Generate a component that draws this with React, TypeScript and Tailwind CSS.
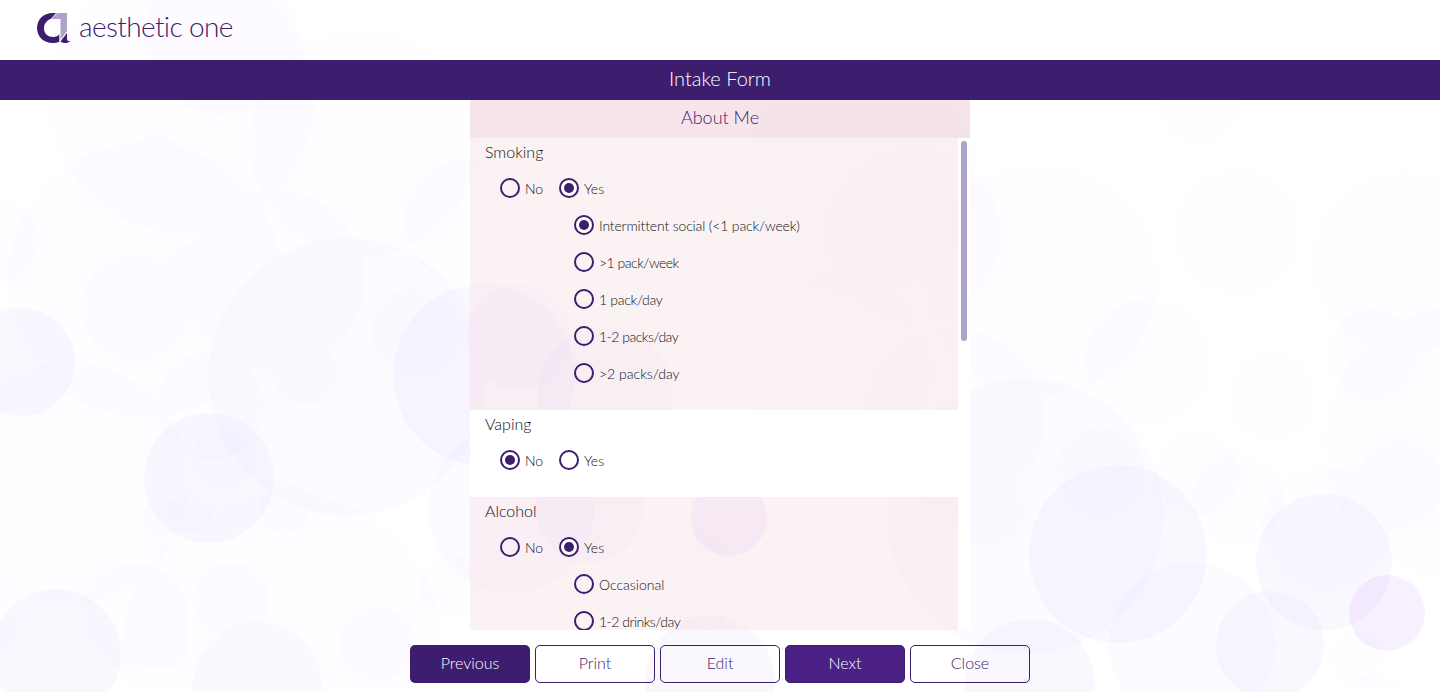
import React from "react";

type Circle = [cx: number, cy: number, r: number];

const FAINT: Circle[] = [
  [1237, 232, 63], [1404, 263, 92], [1460, 443, 137], [1272, 397, 44],
  [1148, 361, 63], [1042, 280, 116], [1199, 105, 40], [182, 100, 133], [363, 143, 114],
  [67, 483, 122], [-3, 242, 42], [283, 653, 162], [468, 222, 64], [450, 585, 31],
  [1325, 530, 64], [1238, 500, 46], [1197, 473, 43], [1355, 657, 26], [1373, 712, 38],
  [145, 280, 138], [860, 175, 118], [-20, 615, 43], [193, 512, 20], [163, 643, 26],
  [305, 373, 33], [1100, 470, 44], [990, 512, 35],
];

const SOFT: Circle[] = [
  [274, 280, 91], [135, 308, 54], [193, 283, 38], [156, 167, 32], [210, 406, 54],
  [415, 332, 44], [163, 517, 20], [284, 508, 26],
  [135, 617, 54], [231, 600, 38], [378, 644, 38], [222, 463, 32],
  [955, 419, 90], [1400, 484, 44], [1372, 355, 46],
  [221, 38, 77], [687, 583, 54], [914, 235, 87], [835, 372, 96],
];

const MEDIUM: Circle[] = [
  [347, 377, 139], [257, 687, 65], [511, 510, 83], [1025, 516, 138], [1192, 645, 83],
  [518, 337, 52],
];

const STRONG: Circle[] = [
  [21, 362, 54], [209, 478, 65], [56, 654, 65], [484, 375, 91], [605, 395, 68],
  [589, 509, 54], [710, 681, 65], [1030, 684, 65], [1118, 554, 89], [1324, 562, 68],
  [1270, 645, 54],
];

const PINK: Circle[] = [[1387, 613, 38], [729, 518, 38]];

function Layer({ items, className }: { items: Circle[]; className: string }) {
  return (
    <g className={className}>
      {items.map(([cx, cy, r], i) => (
        <circle key={i} cx={cx} cy={cy} r={r} />
      ))}
    </g>
  );
}

function Bubbles() {
  return (
    <svg className="absolute inset-0 -z-10" width="1440" height="692" viewBox="0 0 1440 692" aria-hidden="true">
      <Layer items={FAINT} className="fill-[#7a3cf0]/[0.006]" />
      <Layer items={SOFT} className="fill-[#7a3cf0]/[0.009]" />
      <Layer items={MEDIUM} className="fill-[#7a3cf0]/[0.018]" />
      <Layer items={STRONG} className="fill-[#7a3cff]/[0.035]" />
      <Layer items={PINK} className="fill-[#9a3cf0]/[0.075]" />
    </svg>
  );
}

function Logo() {
  return (
    <div className="flex items-start">
      <svg width="34" height="32" viewBox="0 0 34 32" aria-hidden="true">
        <path d="M19 1H15.500C6.500 1 0 7.500 0 16s6.500 15 15.500 15c2.500 0 5-.4 6.800-1.200V22.200C21 24 19 25 16.500 25 11 25 7 21.500 7 16.500 7 11 10.500 8 14 6.800z" fill="#3d1d6d" />
        <path d="M20 1h10v18L23.500 28V7H14.500z" fill="#aea4cb" />
        <path d="M30 21v5.500c0 2 1 2.800 3 2.500-1 1.400-3 2-4.500 2-2 0-3.500-.5-5-1.500z" fill="#3d1d6d" />
      </svg>
      <span className="mt-[-2px] ml-2 whitespace-nowrap text-[28px] leading-8 font-light tracking-[-0.62px] [font-variant-ligatures:none]">
        aesthetic one
      </span>
    </div>
  );
}

function Radio({ label, checked = false }: { label: string; checked?: boolean }) {
  const tracking = label.length > 20
    ? "tracking-[-0.15px]"
    : label.startsWith(">1") || label.startsWith("1-2")
      ? "tracking-[-0.5px]"
      : label.startsWith("1 ")
        ? "tracking-[-0.3px]"
        : "";
  return (
    <label className="flex h-[37px] items-start gap-[5px] pt-2">
      <span className={checked
        ? "flex size-5 shrink-0 items-center justify-center rounded-full border-2 border-[#3d1d6d] bg-white"
        : "flex size-5 shrink-0 rounded-full border-2 border-[#3d1d6d]"}>
        {checked && <span className="size-2.5 rounded-full bg-[#3d1d6d]" />}
      </span>
      <span className={`whitespace-nowrap text-[14px] leading-[21px] text-[#101214] ${tracking}`}>{label}</span>
    </label>
  );
}

interface QuestionProps {
  title: string;
  answer: "No" | "Yes";
  options?: string[];
  selected?: string;
  tinted?: boolean;
}

function Question({ title, answer, options = [], selected, tinted }: QuestionProps) {
  return (
    <section className={tinted ? "w-[488px] bg-[#f6dfe3]/40 pb-[18px]" : "w-[488px] bg-white pb-[18px]"}>
      <h2 className="h-8 pl-[15px] text-[16px] leading-7 text-[#101214]">{title}</h2>
      <div className="flex pl-[30px]">
        <div className="w-[59px]">
          <Radio label="No" checked={answer === "No"} />
        </div>
        <Radio label="Yes" checked={answer === "Yes"} />
      </div>
      <div className="pl-[104px]">
        {options.map((option) => (
          <Radio key={option} label={option} checked={option === selected} />
        ))}
      </div>
    </section>
  );
}

const outlined = "h-[38px] w-[120px] rounded-[5px] border border-[#3d1d6d] pb-0.5 text-[16px] text-[#3d1d6d]";

export default function App() {
  return (
    <div className="relative isolate flex h-[692px] w-full flex-col overflow-hidden bg-white font-['Lato',sans-serif] font-light text-[#3d1d6d]">
      <Bubbles />
      <header className="flex h-[60px] items-start pt-3 pl-[37px]">
        <Logo />
      </header>
      <h1 className="h-10 bg-[#3d1d6d] text-center text-[20px] leading-[37px] text-white">Intake Form</h1>
      <main className="mx-auto flex h-[530px] w-[500px] flex-col">
        <div className="h-[38px] shrink-0 bg-[#ebc3d0]/45 text-center text-[18px] leading-[35px]">About Me</div>
        <div className="flex h-[492px] overflow-hidden">
          <div className="w-[488px] shrink-0">
            <Question
              title="Smoking"
              answer="Yes"
              tinted
              options={["Intermittent social (<1 pack/week)", ">1 pack/week", "1 pack/day", "1-2 packs/day", ">2 packs/day"]}
              selected="Intermittent social (<1 pack/week)"
            />
            <Question title="Vaping" answer="No" />
            <Question title="Alcohol" answer="Yes" tinted options={["Occasional", "1-2 drinks/day"]} />
          </div>
          <div className="w-3 bg-white pt-[3px] pl-[3px]">
            <div className="h-[200px] w-1.5 rounded-full bg-[#aea4cb]" />
          </div>
        </div>
      </main>
      <footer className="mt-[15px] flex justify-center gap-[5px]">
        <button className="h-[38px] w-[120px] rounded-[5px] bg-[#3d1d6d] pb-0.5 text-[16px] text-white">Previous</button>
        <button className={outlined}>Print</button>
        <button className={outlined}>Edit</button>
        <button className="h-[38px] w-[120px] rounded-[5px] border border-[#3d1d6d] bg-[#4a2085] pb-0.5 text-[16px] text-white">Next</button>
        <button className={outlined}>Close</button>
      </footer>
    </div>
  );
}
